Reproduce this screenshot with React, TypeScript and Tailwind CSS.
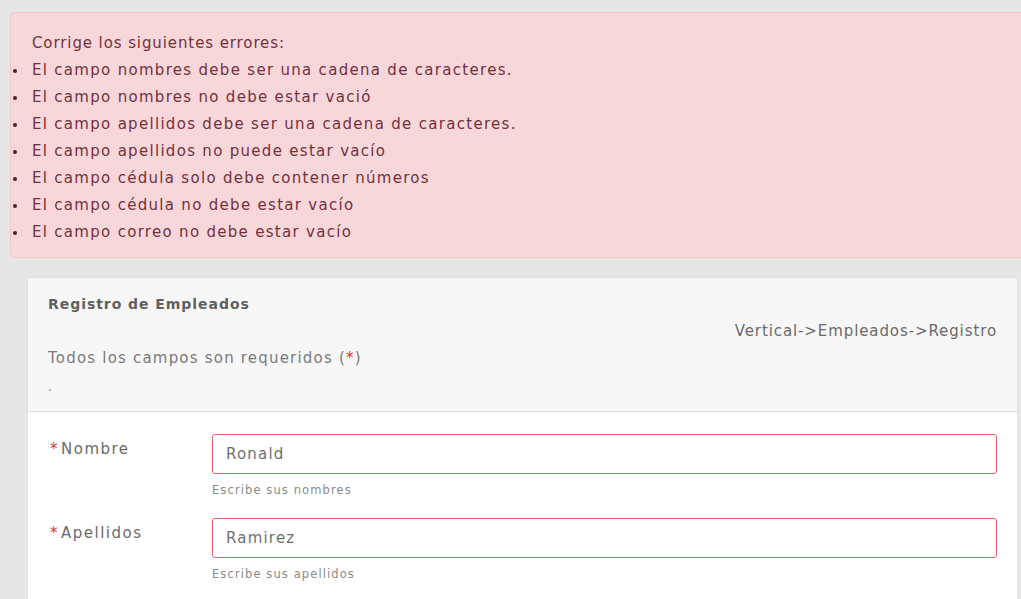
const ERRORS = [
  "El campo nombres debe ser una cadena de caracteres.",
  "El campo nombres no debe estar vació",
  "El campo apellidos debe ser una cadena de caracteres.",
  "El campo apellidos no puede estar vacío",
  "El campo cédula solo debe contener números",
  "El campo cédula no debe estar vacío",
  "El campo correo no debe estar vacío",
]

function Field({ label, value, help }: { label: string; value: string; help: string }) {
  return (
    <div className="flex">
      <label className="w-[164px] shrink-0 pt-[4px] text-[15px] tracking-[1.5px] text-[#6b6b6b]">
        <span className="text-[#e3342f] ml-[2px] mr-[2px]">*</span>
        {label}
      </label>
      <div className="flex-1">
        <div className="h-[40px] border border-[#e0606e] rounded-[3px] bg-white px-[13px] flex items-center text-[15px] tracking-[1.2px] text-[#707070]">
          {value}
        </div>
        <p className="mt-[8px] text-[11.5px] tracking-[1.1px] text-[#8a8a8a]">{help}</p>
      </div>
    </div>
  )
}

export default function App() {
  return (
    <div className="min-h-[599px] w-[1021px] overflow-hidden bg-[#e6e6e6] pt-[12px] pl-[10px] font-['DejaVu_Sans',sans-serif]">
      {/* Alert */}
      <div className="w-[1030px] bg-[#f8d7da] border border-[#f5c6cb] rounded-[4px] pt-[17px] pb-[11px] pl-[21px] text-[15px] tracking-[1.3px] text-[#74303c] leading-[27px]">
        <p className="tracking-[0.9px]">Corrige los siguientes errores:</p>
        <ul>
          {ERRORS.map(e => (
            <li key={e} className="relative">
              <span className="absolute -left-[19px] top-[12px] w-[4px] h-[4px] rounded-full bg-[#5a1a22]" />
              {e}
            </li>
          ))}
        </ul>
      </div>

      {/* Card */}
      <div className="ml-[17px] mt-[19px] w-[991px] border border-[#e2e2e2] bg-white pb-[40px]">
        <div className="bg-[#f7f7f7] border-b border-[#dcdcdc] px-[20px] pt-[15px] pb-[17px]">
          <h2 className="text-[14px] font-bold tracking-[0.95px] text-[#5f5f5f] leading-[22px]">Registro de Empleados</h2>
          <div className="flex justify-end mt-[6px] text-[15px] tracking-[0.9px] text-[#6a6a6a] leading-[20px]">
            Vertical-&gt;Empleados-&gt;Registro
          </div>
          <p className="mt-[7px] text-[15px] tracking-[1.2px] text-[#7a7a7a] leading-[20px]">
            Todos los campos son requeridos (<span className="text-[#e3342f]">*</span>)
          </p>
          <p className="mt-[12px] text-[12px] text-[#7a7a7a] leading-[14px]">.</p>
        </div>
        <div className="px-[20px] pt-[22px] flex flex-col gap-[19px]">
          <Field label="Nombre" value="Ronald" help="Escribe sus nombres" />
          <Field label="Apellidos" value="Ramirez" help="Escribe sus apellidos" />
        </div>
      </div>
    </div>
  )
}
